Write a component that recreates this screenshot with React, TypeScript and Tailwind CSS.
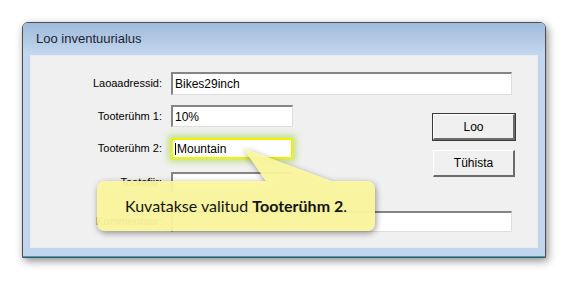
import React from "react";

const ui = { fontFamily: '"Liberation Sans", Arial, sans-serif' };

function Field({ label, width, height, value, className = "" }: { label: string; width: number; height: number; value?: string; className?: string }) {
  return (
    <div className={`flex items-center ${className}`} style={{ height }}>
      <div className="w-[132px] text-right text-[11px] text-black pr-[1px]">{label}</div>
      <div
        className="ml-[8px] h-full bg-white border-t-2 border-l-2 border-t-[#858585] border-l-[#858585] border-r border-b border-r-[#dedede] border-b-[#dedede] flex items-center pl-[2px] text-[12px] text-black"
        style={{ width }}
      >
        {value}
      </div>
    </div>
  );
}

function Btn({ children, isDefault = false, className = "" }: { children: React.ReactNode; isDefault?: boolean; className?: string }) {
  return (
    <div
      className={`w-[82px] flex items-center justify-center bg-[#f0f0f0] text-[12px] text-black border-t border-l border-t-white border-l-white border-b-2 border-r-2 border-b-[#6b6b6b] border-r-[#6b6b6b] ${
        isDefault ? "outline outline-1 outline-[#3a3a3a]" : ""
      } ${className}`}
    >
      {children}
    </div>
  );
}

export default function App() {
  return (
    <div className="relative w-[568px] h-[281px] bg-white overflow-hidden" style={ui}>
      <div className="pt-[22px] pl-[22px]">
        <div className="w-[524px] h-[236px] flex flex-col rounded-t-[6px] border border-[#4e4e4e] shadow-[2px_3px_9px_rgba(0,0,0,0.45)] overflow-hidden">
          <div className="h-[32px] shrink-0 bg-gradient-to-b from-[#9fbadb] to-[#c4d8ee] flex items-center pl-[13px] text-[13px] text-[#1b2433]">
            Loo inventuurialus
          </div>
          <div className="flex-1 flex flex-col bg-[#c1d6ed] px-[7px]">
            <div className="flex-1 bg-[#f0f0f0] border border-[#e6edf5] flex flex-col">
              <Field label="Laoaadressid:" width={341} height={23} value="Bikes29inch" className="mt-[16px]" />
              <div className="flex mt-[10px]">
                <div className="flex flex-col">
                  <Field label="Tooterühm 1:" width={122} height={22} value="10%" />
                  <div className="flex items-center h-[21px] mt-[11px]">
                    <div className="w-[132px] text-right text-[11px] text-black pr-[1px]">Tooterühm 2:</div>
                    <div className="ml-[8px] w-[122px] h-full bg-white border-2 border-[#f2f200] shadow-[0_0_6px_3px_rgba(175,220,95,0.7)] flex items-center pl-[2px] text-[12px] text-black">
                      <span className="w-[1px] h-[12px] bg-black mr-[1px]" />
                      Mountain
                    </div>
                  </div>
                  <Field label="Tootefiir:" width={122} height={21} className="mt-[13px]" />
                </div>
                <div className="flex flex-col ml-[140px] pt-[9px]">
                  <Btn isDefault className="h-[26px]">Loo</Btn>
                  <Btn className="h-[27px] mt-[10px]">Tühista</Btn>
                </div>
              </div>
              <Field label="Kommentaar:" width={341} height={21} className="mt-[18px]" />
            </div>
            <div className="h-[8px] shrink-0" />
          </div>
          <div className="h-[1px] shrink-0 bg-[#3aa3c6]" />
        </div>
      </div>

      <svg className="absolute left-0 top-0 pointer-events-none" width="568" height="281" viewBox="0 0 568 281">
        <defs>
          <filter id="sh" x="-20%" y="-40%" width="140%" height="180%">
            <feDropShadow dx="1" dy="2" stdDeviation="3" floodColor="#000" floodOpacity="0.45" />
          </filter>
        </defs>
        <path
          d="M106 181 L266 181 L243 148 L331 181 L366 181 Q375 181 375 190 L375 222 Q375 231 366 231 L106 231 Q97 231 97 222 L97 190 Q97 181 106 181 Z"
          fill="#fcf79e"
          fillOpacity="0.93"
          filter="url(#sh)"
        />
      </svg>
      <div
        className="absolute left-[97px] top-[181px] w-[278px] h-[50px] flex items-center justify-center text-[16px] text-[#141414]"
        style={{ fontFamily: 'Lato, "Open Sans", sans-serif' }}
      >
        <span>
          Kuvatakse valitud <b>Tooterühm 2</b>.
        </span>
      </div>
    </div>
  );
}
